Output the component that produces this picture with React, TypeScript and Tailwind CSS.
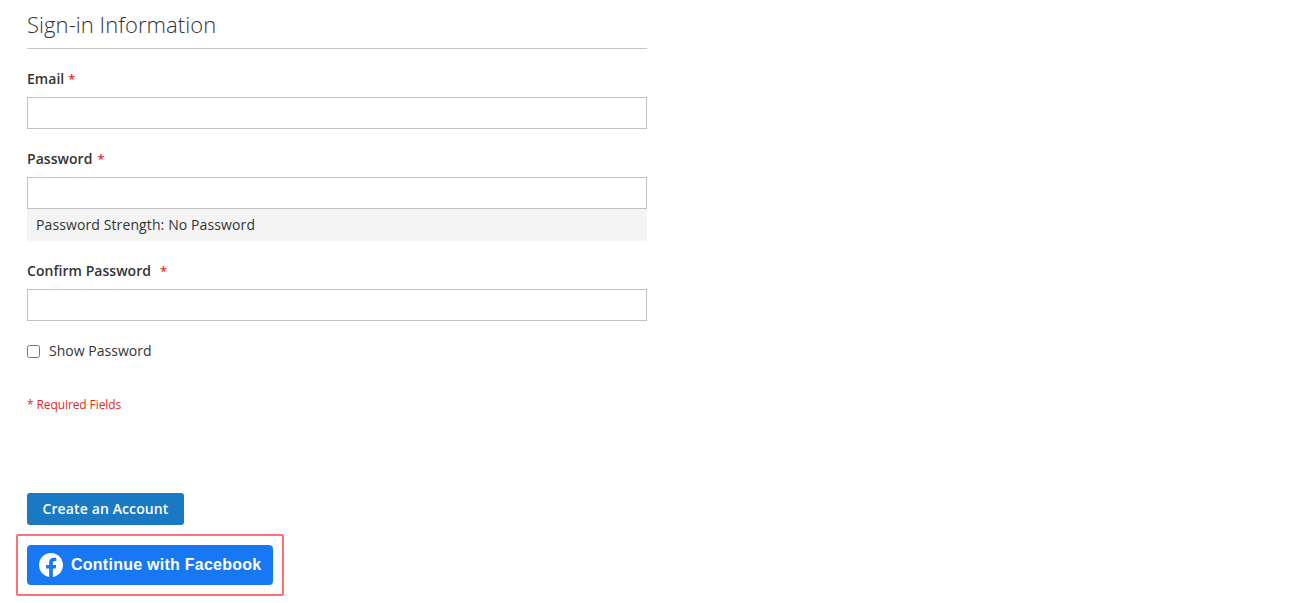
function Req({ className = "ml-[5px]" }: { className?: string }) {
  return <span className={`${className} text-[#e02b27] text-[12.6px]`}>*</span>;
}

function Label({ children }: { children: React.ReactNode }) {
  return <div className="h-[20px] leading-[20px] text-[14px] font-[550] text-[#333] mb-[8px] tracking-[0.04px]">{children}</div>;
}

const inputCls = "block w-full h-[32px] border border-[#c2c2c2] bg-white outline-none";

export default function App() {
  return (
    <div className="min-h-[603px] bg-white pl-[27px] font-['Open_Sans',sans-serif] text-[#333] overflow-hidden">
      <div className="w-[620px]">
        <div className="h-[49px] border-b border-[#c6c6c6] pt-[9px] text-[22px] leading-[30px] font-light text-[#333] tracking-[0.06px]">
          Sign-in Information
        </div>
        <div className="mt-[20px]">
          <Label>Email<Req className="ml-[4px]" /></Label>
          <input className={inputCls} />
        </div>
        <div className="mt-[20px]">
          <Label>Password<Req /></Label>
          <input type="password" className={inputCls} />
          <div className="h-[32px] bg-[#f4f4f4] pl-[9px] text-[14px] leading-[32px] tracking-[0.11px]">Password Strength: No Password</div>
        </div>
        <div className="mt-[20px]">
          <Label>Confirm Password<Req className="ml-[9px]" /></Label>
          <input type="password" className={inputCls} />
        </div>
        <label className="mt-[20px] flex h-[20px] items-center">
          <input type="checkbox" className="m-0 h-[13px] w-[13px]" />
          <span className="ml-[9px] text-[14px] leading-[20px] tracking-[0.02px]">Show Password</span>
        </label>
        <div className="mt-[34px] h-[20px] text-[12px] leading-[20px] text-[#e02b27] tracking-[-0.1px]">* Required Fields</div>
      </div>
      <button className="mt-[78px] block h-[32px] w-[157px] rounded-[3px] bg-[#1979c3] text-center text-[14px] font-[550] leading-[32px] text-white tracking-[0.12px]">
        Create an Account
      </button>
      <div className="mt-[9px] -ml-[11px] w-[268px] h-[62px] rounded-[2px] border-2 border-[#ff7076] pl-[9px] pt-[9px]">
        <button className="flex h-[40px] w-[246px] items-center rounded-[4px] bg-[#1877f2] pl-[12px] font-['Liberation_Sans',sans-serif] text-[16px] font-bold tracking-[0.25px] text-white">
          <svg viewBox="0 0 24 24" className="mr-[8px] h-[24px] w-[24px]" fill="#fff">
            <path d="M24 12.073C24 5.405 18.627 0 12 0S0 5.405 0 12.073c0 6.026 4.388 11.02 10.125 11.927v-8.437H7.078v-3.49h3.047V9.413c0-3.026 1.792-4.697 4.533-4.697 1.312 0 2.686.236 2.686.236v2.971h-1.513c-1.491 0-1.956.93-1.956 1.886v2.264h3.328l-.532 3.49h-2.796V24C19.612 23.093 24 18.099 24 12.073z" />
          </svg>
          Continue with Facebook
        </button>
      </div>
    </div>
  );
}
